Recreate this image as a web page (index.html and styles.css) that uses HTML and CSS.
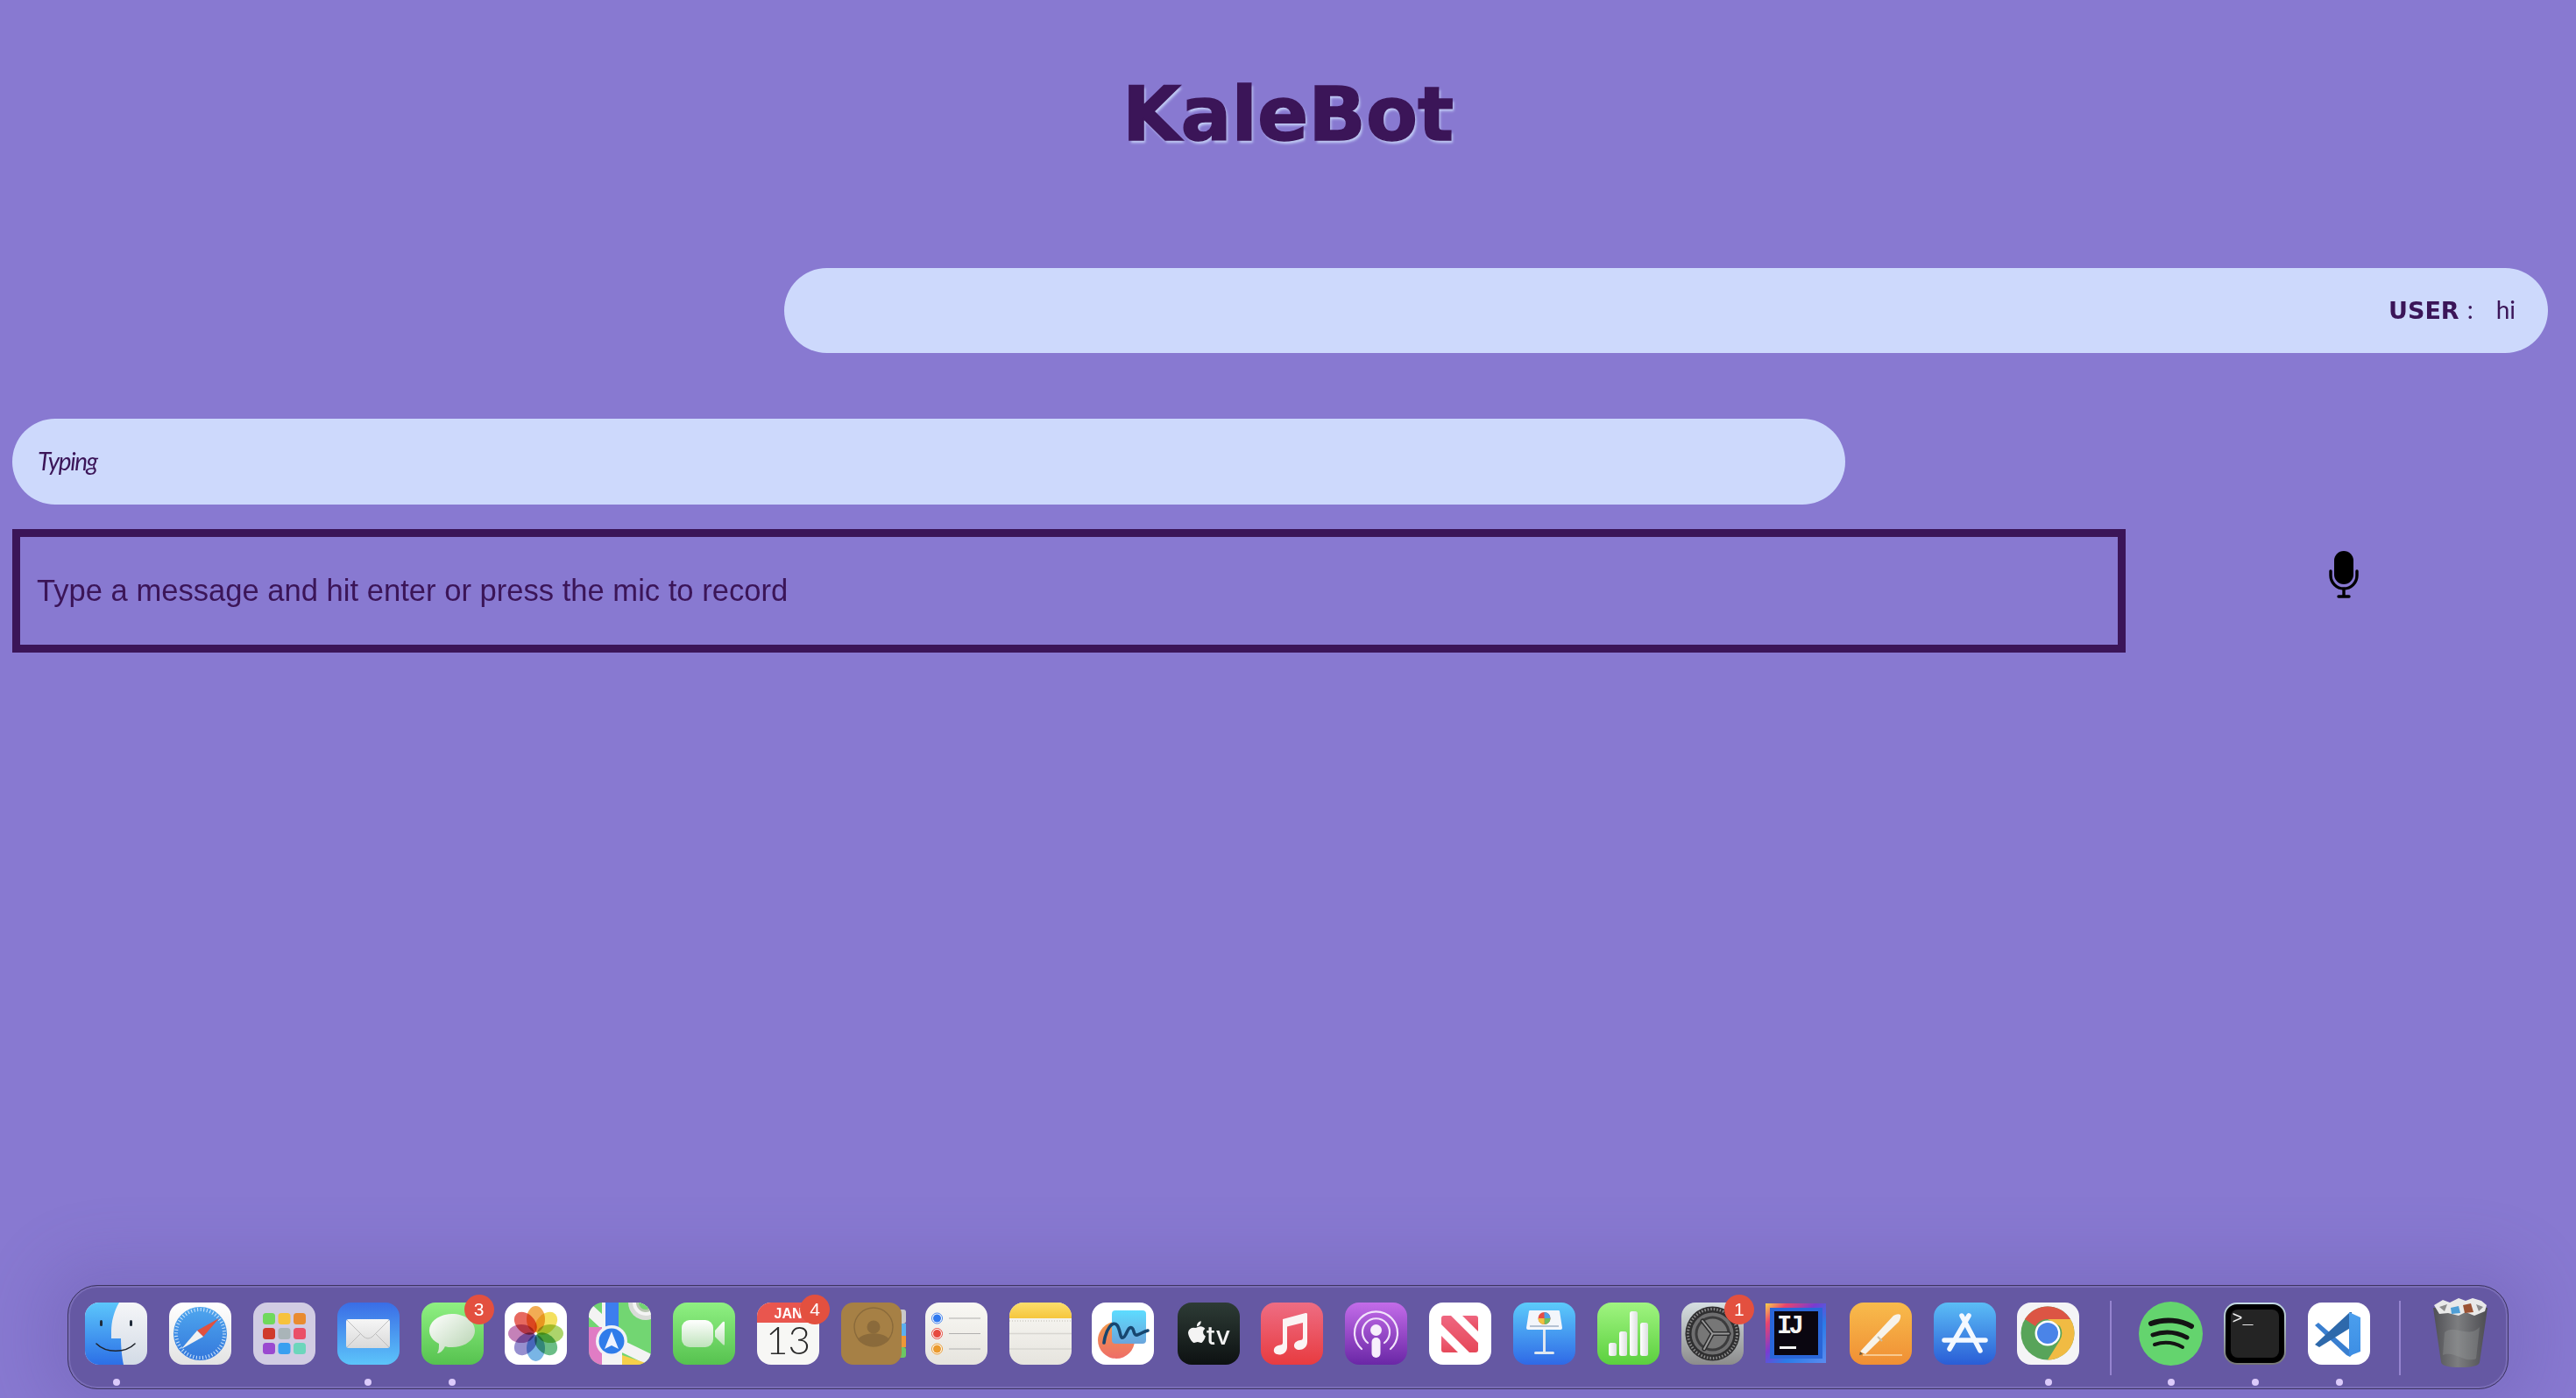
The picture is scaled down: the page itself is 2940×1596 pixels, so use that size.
FILE: index.html
```html
<!DOCTYPE html>
<html lang="en">
<head>
<meta charset="utf-8">
<title>KaleBot</title>
<link rel="stylesheet" href="styles.css">
</head>
<body>
<svg class="defs" width="0" height="0" aria-hidden="true">
  <defs>
    <linearGradient id="gFinderL" x1="0" y1="0" x2="0" y2="1"><stop offset="0" stop-color="#5cc6fb"/><stop offset="1" stop-color="#2c6fe6"/></linearGradient>
    <linearGradient id="gFinderR" x1="0" y1="0" x2="0" y2="1"><stop offset="0" stop-color="#f5f6f8"/><stop offset="1" stop-color="#d3dbe6"/></linearGradient>
    <linearGradient id="gSafariBg" x1="0" y1="0" x2="0" y2="1"><stop offset="0" stop-color="#fff"/><stop offset="1" stop-color="#e3e3e3"/></linearGradient>
    <linearGradient id="gSafari" x1="0" y1="0" x2="0" y2="1"><stop offset="0" stop-color="#4ea6ee"/><stop offset="1" stop-color="#3478dc"/></linearGradient>
    <linearGradient id="gMail" x1="0" y1="0" x2="0" y2="1"><stop offset="0" stop-color="#3a6de6"/><stop offset="1" stop-color="#5cc4fa"/></linearGradient>
    <linearGradient id="gEnv" x1="0" y1="0" x2="0" y2="1"><stop offset="0" stop-color="#f6f6f6"/><stop offset="1" stop-color="#d9d9d9"/></linearGradient>
    <linearGradient id="gGreen" x1="0" y1="0" x2="0" y2="1"><stop offset="0" stop-color="#8ff082"/><stop offset="1" stop-color="#56c24f"/></linearGradient>
    <linearGradient id="gBubble" x1="0" y1="0" x2="1" y2="1"><stop offset="0" stop-color="#fff"/><stop offset="1" stop-color="#b4d2ae"/></linearGradient>
    <linearGradient id="gFace" x1="0" y1="0" x2="0" y2="1"><stop offset="0" stop-color="#fff"/><stop offset="1" stop-color="#bfe3bb"/></linearGradient>
    <linearGradient id="gNotes" x1="0" y1="0" x2="0" y2="1"><stop offset="0" stop-color="#fdde6c"/><stop offset="1" stop-color="#f5c63c"/></linearGradient>
    <linearGradient id="gPaper" x1="0" y1="0" x2="0" y2="1"><stop offset="0" stop-color="#f9f8f4"/><stop offset="1" stop-color="#e6e4de"/></linearGradient>
    <linearGradient id="gFree" x1="0" y1="0" x2="0" y2="1"><stop offset="0" stop-color="#5ddcff"/><stop offset="1" stop-color="#6ba5dc"/></linearGradient>
    <linearGradient id="gFreeO" x1="0" y1="0" x2="0" y2="1"><stop offset="0" stop-color="#f29a4c"/><stop offset="1" stop-color="#ee6e68"/></linearGradient>
    <linearGradient id="gTv" x1="0" y1="0" x2="0" y2="1"><stop offset="0" stop-color="#2d3b35"/><stop offset="1" stop-color="#0d1112"/></linearGradient>
    <linearGradient id="gMusic" x1="0" y1="0" x2="0" y2="1"><stop offset="0" stop-color="#ee6d83"/><stop offset="1" stop-color="#e83b40"/></linearGradient>
    <linearGradient id="gPod" x1="0" y1="0" x2="0" y2="1"><stop offset="0" stop-color="#c36ce9"/><stop offset="1" stop-color="#6a27a6"/></linearGradient>
    <linearGradient id="gNews" x1="0" y1="0" x2="0" y2="1"><stop offset="0" stop-color="#ef6680"/><stop offset="1" stop-color="#e64859"/></linearGradient>
    <linearGradient id="gKey" x1="0" y1="0" x2="0" y2="1"><stop offset="0" stop-color="#5ccbfb"/><stop offset="1" stop-color="#2f69e6"/></linearGradient>
    <linearGradient id="gNum" x1="0" y1="0" x2="0" y2="1"><stop offset="0" stop-color="#a0f481"/><stop offset="1" stop-color="#5bd03e"/></linearGradient>
    <linearGradient id="gBar" x1="0" y1="0" x2="1" y2="0"><stop offset="0" stop-color="#fff"/><stop offset="1" stop-color="#dcdfe0"/></linearGradient>
    <linearGradient id="gSet" x1="0" y1="0" x2="0" y2="1"><stop offset="0" stop-color="#d6dfe2"/><stop offset="1" stop-color="#8c8c8c"/></linearGradient>
    <linearGradient id="gIj" x1="0" y1="0" x2="1" y2="1"><stop offset="0" stop-color="#fbd34a"/><stop offset=".18" stop-color="#e8446e"/><stop offset=".42" stop-color="#7a3bd0"/><stop offset=".65" stop-color="#2a7be8"/><stop offset="1" stop-color="#5a8cf0"/></linearGradient>
    <linearGradient id="gPages" x1="0" y1="0" x2="0" y2="1"><stop offset="0" stop-color="#f8bb4c"/><stop offset="1" stop-color="#f08f34"/></linearGradient>
    <linearGradient id="gStore" x1="0" y1="0" x2="0" y2="1"><stop offset="0" stop-color="#5bbdf6"/><stop offset="1" stop-color="#2a5dd6"/></linearGradient>
    <linearGradient id="gTerm" x1="0" y1="0" x2="0" y2="1"><stop offset="0" stop-color="#c4dbe4"/><stop offset="1" stop-color="#767676"/></linearGradient>
    <linearGradient id="gTrash" x1="0" y1="0" x2="1" y2="0"><stop offset="0" stop-color="#4f4f54"/><stop offset=".45" stop-color="#7d7e80"/><stop offset="1" stop-color="#4c4c51"/></linearGradient>
    <linearGradient id="gVs" x1="0" y1="0" x2="0" y2="1"><stop offset="0" stop-color="#4b9fee"/><stop offset="1" stop-color="#3d8ee4"/></linearGradient>
  </defs>
</svg>

<div class="page">
  <h1 class="title">KaleBot</h1>

  <div class="row row-user">
    <div class="bubble bubble-user"><span class="line"><strong class="who">USER</strong><span class="colon">:</span><span class="msg">hi</span></span></div>
  </div>

  <div class="row">
    <div class="bubble bubble-bot"><em class="typing">Typing</em></div>
  </div>

  <div class="compose">
    <input class="field" type="text" placeholder="Type a message and hit enter or press the mic to record">
    <button class="mic" type="button" aria-label="Record">
      <svg viewBox="0 0 34 54" width="34" height="54"><rect x="6" y="0" width="22" height="38" rx="11" fill="#000"/><path d="M2 23v5a15 15 0 0 0 30 0v-5" fill="none" stroke="#000" stroke-width="3.4" stroke-linecap="round"/><path d="M17 43v8" stroke="#000" stroke-width="3.4"/><path d="M11 52h12" stroke="#000" stroke-width="3.4" stroke-linecap="round"/></svg>
    </button>
  </div>

  <nav class="dock">
    <div class="app on"><svg class="ic" viewBox="0 0 71 71"><rect width="71" height="71" rx="16" fill="url(#gFinderR)"/><path d="M16 0H39C33 10 30 22 30 33V41H41C41 50 42 62 44 71H16A16 16 0 0 1 0 55V16A16 16 0 0 1 16 0Z" fill="url(#gFinderL)"/><rect x="17" y="20" width="3" height="7" rx="1.5" fill="#1f2b3a"/><rect x="51" y="20" width="3" height="7" rx="1.5" fill="#1f2b3a"/><path d="M13 47C24 58 46 58 57 47" fill="none" stroke="#20242c" stroke-width="1.6" stroke-linecap="round"/></svg></div>
    <div class="app"><svg class="ic" viewBox="0 0 71 71"><rect width="71" height="71" rx="16" fill="url(#gSafariBg)"/><circle cx="35.500" cy="35.500" r="30.500" fill="url(#gSafari)"/><circle cx="35.500" cy="35.500" r="27.500" fill="none" stroke="#d6e8fa" stroke-width="4" stroke-dasharray="1 2.600"/><polygon points="57,18 39,39 32,32" fill="#e0513f"/><polygon points="14,53 32,32 39,39" fill="#f1f1f1"/></svg></div>
    <div class="app"><svg class="ic" viewBox="0 0 71 71"><rect width="71" height="71" rx="16" fill="#d1cce3"/><rect x="11" y="12" width="14" height="13" rx="3.500" fill="#70d95c"/><rect x="28.500" y="12" width="14" height="13" rx="3.500" fill="#f7c23c"/><rect x="46" y="12" width="14" height="13" rx="3.500" fill="#e98b30"/><rect x="11" y="29" width="14" height="13" rx="3.500" fill="#d03a2c"/><rect x="28.500" y="29" width="14" height="13" rx="3.500" fill="#a9b4b8"/><rect x="46" y="29" width="14" height="13" rx="3.500" fill="#ea4f68"/><rect x="11" y="46" width="14" height="13" rx="3.500" fill="#9a48d0"/><rect x="28.500" y="46" width="14" height="13" rx="3.500" fill="#3a9ff0"/><rect x="46" y="46" width="14" height="13" rx="3.500" fill="#6cd6bc"/></svg></div>
    <div class="app on"><svg class="ic" viewBox="0 0 71 71"><rect width="71" height="71" rx="16" fill="url(#gMail)"/><rect x="10" y="19" width="50" height="33" rx="3" fill="url(#gEnv)"/><path d="M11 20L30 39Q35 43 40 39L59 20M11 51L26 36M59 51L44 36" fill="none" stroke="#bdbdbd" stroke-width="1"/></svg></div>
    <div class="app on"><svg class="ic" viewBox="0 0 71 71"><rect width="71" height="71" rx="16" fill="url(#gGreen)"/><path d="M35 13C49 13 61 21 61 32S49 51 35 51C32 51 29 51 27 50C25 54 22 58 18 58C20 55 20 51 20 47C13 44 9 38 9 32C9 21 21 13 35 13Z" fill="url(#gBubble)"/></svg><span class="badge">3</span></div>
    <div class="app"><svg class="ic" viewBox="0 0 71 71"><rect width="71" height="71" rx="16" fill="#fff"/><g class="petals"><ellipse cx="35.500" cy="19" rx="10.500" ry="15" fill="#ef9a2e"/><ellipse cx="35.500" cy="19" rx="10.500" ry="15" fill="#f2d93c" transform="rotate(45 35.500 35.500)"/><ellipse cx="35.500" cy="19" rx="10.500" ry="15" fill="#9acb4a" transform="rotate(90 35.500 35.500)"/><ellipse cx="35.500" cy="19" rx="10.500" ry="15" fill="#4aaf6b" transform="rotate(135 35.500 35.500)"/><ellipse cx="35.500" cy="19" rx="10.500" ry="15" fill="#5ba5e0" transform="rotate(180 35.500 35.500)"/><ellipse cx="35.500" cy="19" rx="10.500" ry="15" fill="#7f76c4" transform="rotate(225 35.500 35.500)"/><ellipse cx="35.500" cy="19" rx="10.500" ry="15" fill="#b765a8" transform="rotate(270 35.500 35.500)"/><ellipse cx="35.500" cy="19" rx="10.500" ry="15" fill="#e2483c" transform="rotate(315 35.500 35.500)"/></g></svg></div>
    <div class="app"><svg class="ic" viewBox="0 0 71 71"><defs><clipPath id="cMap"><rect width="71" height="71" rx="16"/></clipPath></defs><g clip-path="url(#cMap)"><rect width="71" height="71" fill="#72d672"/><path d="M0 8L26 32M26 44L71 66" stroke="#f3f3f3" stroke-width="13"/><rect x="15" y="0" width="4" height="30" fill="#f3f3f3"/><rect x="19" y="0" width="15" height="30" fill="#3d7eee"/><rect x="0" y="28" width="15" height="43" fill="#e07cc4"/><rect x="15" y="44" width="23" height="27" fill="#f4f4f4"/><path d="M38 60L71 71H38Z" fill="#f6cf4a"/><circle cx="65" cy="0" r="20" fill="#d9dbd8"/><circle cx="65" cy="0" r="15" fill="#f4f4f4"/><circle cx="65" cy="0" r="11" fill="#b7c6b0"/><circle cx="65" cy="0" r="8" fill="#72d672"/><circle cx="26" cy="44" r="18" fill="#f2f2f6"/><circle cx="26" cy="44" r="14.500" fill="#2f7cea"/><path d="M26 33L34 53L26 49L18 53Z" fill="#eef3ff"/></g></svg></div>
    <div class="app"><svg class="ic" viewBox="0 0 71 71"><rect width="71" height="71" rx="16" fill="url(#gGreen)"/><rect x="10" y="20" width="36" height="31" rx="9" fill="url(#gFace)"/><path d="M48 32L57 22Q59 21 59 23V47Q59 50 57 48L48 39Z" fill="url(#gFace)"/></svg></div>
    <div class="app"><svg class="ic" viewBox="0 0 71 71"><rect width="71" height="71" rx="16" fill="#f7f7f5"/><path d="M16 0H55A16 16 0 0 1 71 16V23H0V16A16 16 0 0 1 16 0Z" fill="#e9564e"/><text class="cal-m" x="35.500" y="18" text-anchor="middle">JAN</text><text class="cal-d" x="35.500" y="59" text-anchor="middle">13</text></svg><span class="badge">4</span></div>
    <div class="app app-book"><svg class="ic" viewBox="0 0 74 71"><rect x="60" y="8" width="14" height="16" rx="3" fill="#c9c9c9"/><rect x="60" y="24" width="14" height="14" fill="#5cb0ef"/><rect x="60" y="38" width="14" height="13" fill="#ee9737"/><rect x="60" y="51" width="14" height="12" rx="3" fill="#6cc763"/><rect width="69" height="71" rx="14" fill="#a68045"/><circle cx="37" cy="28" r="22" fill="none" stroke="#8a6a3b" stroke-width="1.400"/><circle cx="37" cy="28" r="7.500" fill="#8a6a3b"/><path d="M19 42C26 33 48 33 55 42C49 52 25 52 19 42Z" fill="#8a6a3b"/></svg></div>
    <div class="app"><svg class="ic" viewBox="0 0 71 71"><rect width="71" height="71" rx="16" fill="url(#gPaper)"/><circle cx="13.500" cy="18" r="6" fill="#fff" stroke="#4a86ec"/><circle cx="13.500" cy="18" r="4.500" fill="#2f78ee"/><circle cx="13.500" cy="35.500" r="6" fill="#fff" stroke="#e64a3f"/><circle cx="13.500" cy="35.500" r="4.500" fill="#e64a3f"/><circle cx="13.500" cy="53" r="6" fill="#fff" stroke="#ea9a2e"/><circle cx="13.500" cy="53" r="4.500" fill="#ea9a2e"/><path d="M27 18H63M27 35.500H63M27 53H63" stroke="#b0b0ae" stroke-width="1.200"/></svg></div>
    <div class="app"><svg class="ic" viewBox="0 0 71 71"><rect width="71" height="71" rx="16" fill="url(#gPaper)"/><path d="M16 0H55A16 16 0 0 1 71 16V18H0V16A16 16 0 0 1 16 0Z" fill="url(#gNotes)"/><path d="M0 21H71" stroke="#bdbbb4" stroke-width="1.200" stroke-dasharray="1 2"/><path d="M0 35.500H71M0 53H71" stroke="#d8d6d1" stroke-width="1.400"/></svg></div>
    <div class="app app-free"><svg class="ic" viewBox="0 0 71 71"><rect width="71" height="71" rx="16" fill="#fff"/><circle cx="28" cy="43" r="21" fill="url(#gFreeO)"/><rect x="23" y="9" width="39" height="38" rx="4" fill="url(#gFree)"/><path d="M14 46C16 30 24 20 29 26C33 31 32 42 36 40C40 38 41 26 46 29C49 31 47 38 52 37C56 36 59 33 64 32" fill="none" stroke="#17466f" stroke-width="3.600" stroke-linecap="round"/></svg></div>
    <div class="app"><svg class="ic" viewBox="0 0 71 71"><rect width="71" height="71" rx="16" fill="url(#gTv)"/><path d="M23 24C25 24 27 22.500 29 22.500C30.500 22.500 32.500 23.300 33.500 25C31 26.500 30.500 30.500 34 32.500C33.500 35 32 37.800 30.500 39C29 40.200 27.500 38.700 25.800 38.700C24 38.700 22.800 40 21.300 39.300C18.500 37.500 15.500 31 16 28.500C16.500 25.500 19 23.500 23 24ZM25 22.500C24.700 19.500 27 17.300 29.300 17C29.500 19.800 27.500 22.300 25 22.500Z" transform="translate(-5.500 2.500) scale(1.100)" fill="#f4f4f4"/><text class="tv" x="33" y="48">tv</text></svg></div>
    <div class="app"><svg class="ic" viewBox="0 0 71 71"><rect width="71" height="71" rx="16" fill="url(#gMusic)"/><path d="M25 19L51 12C52.500 11.700 53 12.500 53 13.500V45C53 51 48 54 44 54C40 54 37.500 51.500 38 48.500C38.500 45 42 43.500 45 43C47 42.700 48 42 48 40V23L30 27.500V51C30 57 25 59.500 21 59.500C17 59.500 14 57 15 53.500C15.500 50.500 19 49 22 48.500C24 48.200 25 47.500 25 45.500Z" fill="#fbf4f4"/></svg></div>
    <div class="app"><svg class="ic" viewBox="0 0 71 71"><rect width="71" height="71" rx="16" fill="url(#gPod)"/><g fill="none" stroke="#f2e3fb" stroke-linecap="round"><path d="M19 53A24.500 24.500 0 1 1 52 53" stroke-width="2.200"/><path d="M26 46A15.500 15.500 0 1 1 45 46" stroke-width="2.200"/></g><circle cx="35.500" cy="31.500" r="6.500" fill="#f7effc"/><rect x="30.500" y="40" width="10" height="23" rx="5" fill="#f7effc"/></svg></div>
    <div class="app"><svg class="ic" viewBox="0 0 71 71"><rect width="71" height="71" rx="16" fill="#fff"/><path d="M14 18Q14 15 17 15H25L56 46V54Q56 57 53 57H46L14 25Z" fill="url(#gNews)"/><path d="M38 15H53Q56 15 56 18V33Z" fill="url(#gNews)"/><path d="M14 38L33 57H17Q14 57 14 54Z" fill="url(#gNews)"/></svg></div>
    <div class="app"><svg class="ic" viewBox="0 0 71 71"><rect width="71" height="71" rx="16" fill="url(#gKey)"/><path d="M18 10Q18 9 19.500 9H51.500Q53 9 53 10L56 29Q56 31 54 31H17Q15 31 15 29Z" fill="#f3f6fb"/><path d="M19 27H52" stroke="#9fb0c6" stroke-width="1.500"/><circle cx="35.500" cy="18" r="7" fill="#e64d45"/><path d="M35.500 18V11A7 7 0 0 1 42.500 18Z" fill="#4da2e6"/><path d="M35.500 18H42.500A7 7 0 0 1 35.500 25Z" fill="#6ebf5e"/><path d="M35.500 18V25A7 7 0 0 1 28.500 18Z" fill="#efc23e"/><rect x="34" y="31" width="3" height="26" fill="#dfe7f0"/><rect x="24" y="56" width="23" height="3" rx="1.500" fill="#dfe7f0"/></svg></div>
    <div class="app"><svg class="ic" viewBox="0 0 71 71"><rect width="71" height="71" rx="16" fill="url(#gNum)"/><rect x="13" y="46" width="9" height="15" rx="2.500" fill="url(#gBar)"/><rect x="25" y="33" width="9" height="28" rx="2.500" fill="url(#gBar)"/><rect x="37" y="10" width="9" height="51" rx="2.500" fill="url(#gBar)"/><rect x="49" y="23" width="9" height="38" rx="2.500" fill="url(#gBar)"/></svg></div>
    <div class="app"><svg class="ic" viewBox="0 0 71 71"><rect width="71" height="71" rx="16" fill="url(#gSet)"/><circle cx="35.500" cy="35.500" r="31" fill="#2f2f30"/><circle cx="35.500" cy="35.500" r="28" fill="none" stroke="#8c8c8c" stroke-width="3" stroke-dasharray="1.500 2"/><circle cx="35.500" cy="35.500" r="24" fill="#6f6f70"/><circle cx="35.500" cy="35.500" r="20" fill="#3c3c3d"/><circle cx="35.500" cy="35.500" r="17" fill="#777"/><path d="M35.500 35.500L24 21M35.500 35.500L54 35.500M35.500 35.500L26 53" stroke="#2d2d2e" stroke-width="5" stroke-linecap="round"/><path d="M35.500 35.500L24 21M35.500 35.500L54 35.500M35.500 35.500L26 53" stroke="#9a9a9a" stroke-width="2" stroke-linecap="round"/></svg><span class="badge">1</span></div>
    <div class="app"><svg class="ic" viewBox="0 0 71 71"><rect y="1" width="69" height="68" fill="url(#gIj)"/><rect x="5" y="6" width="60" height="58" fill="#2a66d8"/><rect x="10" y="10" width="50" height="50" fill="#0a0610"/><text class="ij" x="13" y="35">IJ</text><rect x="16" y="50" width="19" height="3" fill="#f4f4f4"/></svg></div>
    <div class="app"><svg class="ic" viewBox="0 0 71 71"><rect width="71" height="71" rx="16" fill="url(#gPages)"/><path d="M12 56L50 15Q55 12 58 14Q59 17 56 22L18 59Z" fill="#f7f3ea"/><path d="M12 56L11 60L15 59Z" fill="#6a5a40"/><path d="M32 39L37 44" stroke="#c9bda7" stroke-width="2"/><path d="M15 60H60" stroke="#f8c88e" stroke-width="2"/></svg></div>
    <div class="app"><svg class="ic" viewBox="0 0 71 71"><rect width="71" height="71" rx="16" fill="url(#gStore)"/><g stroke="#f4f9ff" stroke-width="5.500" stroke-linecap="round"><path d="M40 15L18 53"/><path d="M32 15L53 55"/><path d="M12 43H59"/></g></svg></div>
    <div class="app on"><svg class="ic" viewBox="0 0 71 71"><rect width="71" height="71" rx="16" fill="#f4f4f6"/><circle cx="35" cy="35" r="30.500" fill="#58a45a"/><path d="M9 19A30.500 30.500 0 0 1 61 19H35A16 16 0 0 0 21 27Z" fill="#dc5544"/><path d="M61 19A30.500 30.500 0 0 1 35 65.500L49 43A16 16 0 0 0 49 27L35 19Z" fill="#f1bb43"/><circle cx="35" cy="35" r="14.500" fill="#fff"/><circle cx="35" cy="35" r="12" fill="#4a84e8"/></svg></div>
    <span class="sep sep-a"></span>
    <div class="app app-spot on"><svg class="ic" viewBox="0 0 73 73"><circle cx="36.500" cy="36.500" r="36.500" fill="#64d46e"/><g fill="none" stroke="#141414" stroke-linecap="round"><path d="M14 25C30 19 48 21 60 28" stroke-width="6"/><path d="M16 38C30 33 44 35 55 41" stroke-width="5"/><path d="M18 49C30 45 41 47 50 52" stroke-width="4"/></g></svg></div>
    <div class="app on"><svg class="ic" viewBox="0 0 71 71"><rect width="71" height="71" rx="15" fill="url(#gTerm)"/><rect x="2" y="2" width="67" height="67" rx="13" fill="#000"/><rect x="8" y="8" width="55" height="55" rx="8" fill="#242424"/><text class="prompt" x="9.500" y="24">&gt;_</text></svg></div>
    <div class="app on"><svg class="ic" viewBox="0 0 71 71"><rect width="71" height="71" rx="16" fill="#fff"/><path d="M8 26L12 23L52 58L48 62L44 60Z" fill="#3a7fd0"/><path d="M13 51L8 48L48 11L50 11V28Z" fill="#2e69ab"/><path d="M47 11L60 17V56L47 61V11Z" fill="url(#gVs)"/></svg></div>
    <span class="sep sep-b"></span>
    <div class="app app-trash"><svg class="ic" viewBox="0 0 64 82"><path d="M1 12L10 74Q11 80 32 80Q53 80 54 74L63 12Z" fill="url(#gTrash)"/><path d="M14 40C26 30 40 48 54 34L50 70C38 76 24 60 12 66Z" fill="#a0a1a3" opacity=".3"/><path d="M2 9L12 3L20 6L30 1L38 4L46 1L56 4L62 9L60 16L48 21L38 17L30 21L18 18L8 19Z" fill="#e9e9e9"/><path d="M21 12L30 10L32 18L22 19Z" fill="#4f9fd6"/><path d="M35 9L44 7L47 17L37 18Z" fill="#9b5233"/><path d="M8 11L17 8L14 16ZM50 8L58 11L53 16Z" fill="#8c8c8c"/></svg></div>
  </nav>
</div>
</body>
</html>
```
FILE: styles.css
```css
* { box-sizing: border-box; }

html, body { margin: 0; height: 100%; }

body {
  background: #8879d1;
  color: #3b1558;
  font-family: "Lato", "Liberation Sans", sans-serif;
  overflow: hidden;
}

.defs { display: block; height: 0; }

.page {
  display: flex;
  flex-direction: column;
  height: 1596px;
}

.title {
  margin: 78px 0 0;
  height: 228px;
  text-align: center;
  font-family: "DejaVu Sans", "Lato", sans-serif;
  font-size: 86px;
  font-weight: 700;
  line-height: 104px;
  color: #3b1558;
  -webkit-text-stroke: 1.5px #3b1558;
  text-shadow: 2px 3px 3px #c3cff6;
}

.row { display: flex; }
.row-user { justify-content: flex-end; padding-right: 32px; margin-bottom: 75px; }

.bubble {
  display: flex;
  align-items: center;
  border-radius: 49px;
  background: #cdd9fc;
  font-size: 28px;
}

.bubble-user {
  justify-content: flex-end;
  width: 2013px;
  height: 97px;
  padding: 0 37px 4px 0;
}

.who {
  font-family: "DejaVu Sans", "Lato", sans-serif;
  font-size: 27px;
  font-weight: 700;
}

.colon { margin-left: 9px; font-weight: 400; }
.msg { margin-left: 26px; font-weight: 400; }

.bubble-bot {
  width: 2092px;
  height: 98px;
  margin: 0 0 28px 14px;
  padding: 0 0 2px 29px;
}

.typing { font-weight: 400; letter-spacing: -1.4px; }

.compose {
  display: flex;
  align-items: flex-start;
  padding-left: 14px;
}

.field {
  flex: none;
  width: 2412px;
  height: 141px;
  padding: 0 19px;
  border: 9px solid #3b1558;
  border-radius: 0;
  background: transparent;
  color: #3b1558;
  font: 34.6px "Liberation Sans", Arial, sans-serif;
  outline: none;
}

.field::placeholder { color: #3b1558; opacity: 1; }

.mic {
  display: block;
  margin: 25px 0 0 232px;
  padding: 0;
  border: 0;
  background: none;
  line-height: 0;
}

.dock {
  display: flex;
  gap: 24.9px;
  height: 119px;
  margin: auto 77px 10px;
  padding: 19px 0 0 19px;
  border: 1px solid #3d3560;
  border-radius: 34px;
  background: #6558a3;
  box-shadow: inset 0 0 0 2px #7a6db7, 0 0 70px 30px rgba(88, 72, 150, .22);
}

.app {
  position: relative;
  flex: none;
  width: 71px;
  height: 71px;
}

.ic { display: block; width: 100%; height: 100%; overflow: visible; }

.app.on::after {
  content: "";
  position: absolute;
  left: 31.5px;
  top: 86.5px;
  width: 8px;
  height: 8px;
  border-radius: 50%;
  background: #dccbfb;
}

.app-book .ic { width: 74px; }
.app-free { margin: 0 1.9px 0 -1.9px; }
.app-spot { width: 73px; height: 73px; margin: -1px -1px 0 6px; }
.app-spot.on::after { left: 32.5px; top: 87.5px; }
.app-trash { width: 64px; height: 82px; margin: -6px 0 0 11px; }

.petals ellipse { mix-blend-mode: multiply; opacity: .82; }

.sep {
  flex: none;
  width: 2px;
  height: 85px;
  margin-top: -2px;
  background: #9584cf;
}

.sep-a { margin-left: 10px; }
.sep-b { margin-left: 8px; }

.badge {
  position: absolute;
  top: -9px;
  left: 49px;
  width: 34px;
  height: 34px;
  border-radius: 50%;
  background: #e3503f;
  color: #fff;
  font: 21px/34px "Liberation Sans", Arial, sans-serif;
  text-align: center;
}

.cal-m { font: 700 16px "Liberation Sans", Arial, sans-serif; fill: #fff; }
.cal-d { font: 300 44px "Lato", sans-serif; fill: #2a2a2a; }
.tv { font: 500 29px "Inter", sans-serif; fill: #f4f4f4; }
.ij { font: 700 29px "Liberation Mono", monospace; letter-spacing: -4px; fill: #f4f4f4; }
.prompt { font: 400 20px "Liberation Mono", monospace; fill: #f2f2f2; }
```
